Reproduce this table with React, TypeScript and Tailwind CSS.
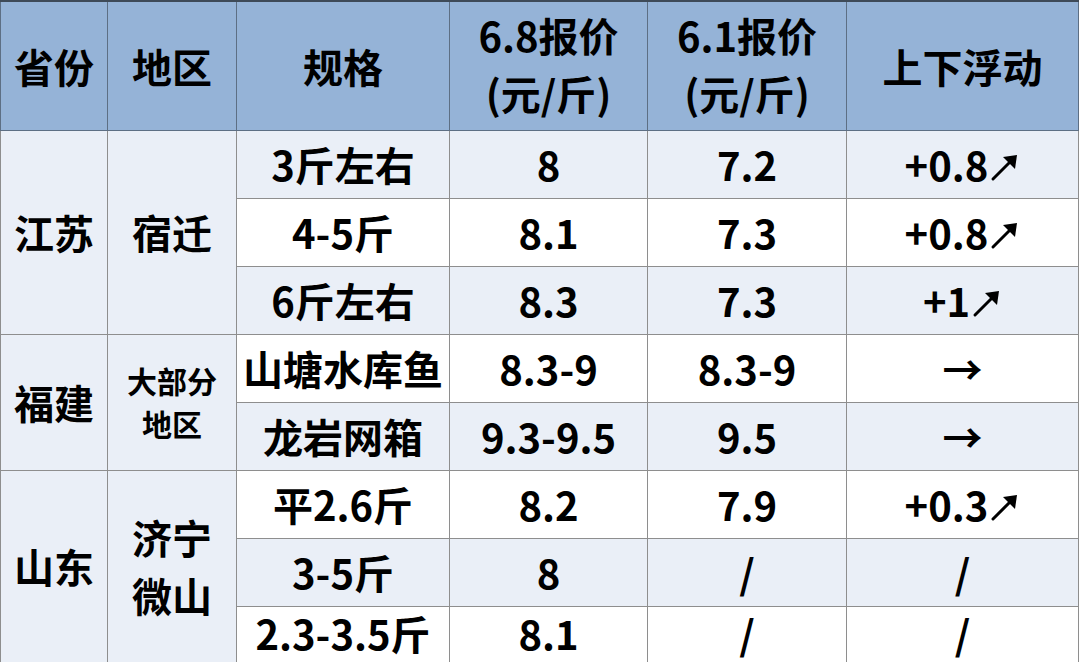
const font = { fontFamily: '"Noto Sans CJK SC", "Noto Sans", sans-serif' };

type Row = { spec: string; p68: string; p61: string; diff: string; light: boolean };

const groups: { prov: string; region: string[]; small?: boolean; rows: Row[] }[] = [
  {
    prov: "江苏",
    region: ["宿迁"],
    rows: [
      { spec: "3斤左右", p68: "8", p61: "7.2", diff: "+0.8↗", light: true },
      { spec: "4-5斤", p68: "8.1", p61: "7.3", diff: "+0.8↗", light: false },
      { spec: "6斤左右", p68: "8.3", p61: "7.3", diff: "+1↗", light: true },
    ],
  },
  {
    prov: "福建",
    region: ["大部分", "地区"],
    small: true,
    rows: [
      { spec: "山塘水库鱼", p68: "8.3-9", p61: "8.3-9", diff: "→", light: false },
      { spec: "龙岩网箱", p68: "9.3-9.5", p61: "9.5", diff: "→", light: true },
    ],
  },
  {
    prov: "山东",
    region: ["济宁", "微山"],
    rows: [
      { spec: "平2.6斤", p68: "8.2", p61: "7.9", diff: "+0.3↗", light: false },
      { spec: "3-5斤", p68: "8", p61: "/", diff: "/", light: true },
      { spec: "2.3-3.5斤", p68: "8.1", p61: "/", diff: "/", light: false },
    ],
  },
];

function Diff({ value }: { value: string }) {
  if (value.endsWith("↗")) {
    return (
      <span className="inline-flex items-center">
        {value.slice(0, -1)}
        <svg width="30" height="30" viewBox="0 0 30 30" className="ml-[2px] mt-[6px]">
          <path d="M3 27 L22 8" stroke="#000" strokeWidth="3" strokeLinecap="round" />
          <path d="M13 5 L27 3 L25 17 Z" fill="#000" />
        </svg>
      </span>
    );
  }
  return <span>{value}</span>;
}

export default function App() {
  const td = "border border-[#8e8e8e] text-center align-middle font-bold text-black";
  return (
    <div className="h-[662px] w-[1080px] overflow-hidden bg-white" style={font}>
      <table className="table-fixed border-collapse border-t-2 border-t-[#3e4a58]">
        <colgroup>
          <col className="w-[107px]" />
          <col className="w-[129px]" />
          <col className="w-[213px]" />
          <col className="w-[198px]" />
          <col className="w-[199px]" />
          <col className="w-[232px]" />
        </colgroup>
        <thead>
          <tr className="h-[129px] bg-[#95b3d7] text-[40px] leading-[1.45]">
            <th className="border border-[#5d6f84] font-bold">省份</th>
            <th className="border border-[#5d6f84] font-bold">地区</th>
            <th className="border border-[#5d6f84] font-bold">规格</th>
            <th className="border border-[#5d6f84] pb-[4px] font-bold">
              6.8报价
              <br />
              (元/斤)
            </th>
            <th className="border border-[#5d6f84] pb-[4px] font-bold">
              6.1报价
              <br />
              (元/斤)
            </th>
            <th className="border border-[#5d6f84] font-bold">上下浮动</th>
          </tr>
        </thead>
        <tbody className="text-[40px] leading-[1.45]">
          {groups.map((g) =>
            g.rows.map((r, i) => {
              const last = g.prov === "山东" && i === 2;
              return (
                <tr
                  key={g.prov + i}
                  className={`${last ? "h-[56px]" : "h-[68px]"} ${r.light ? "bg-[#eaeff7]" : "bg-white"}`}
                >
                  {i === 0 && (
                    <>
                      <td rowSpan={g.rows.length} className={`${td} bg-[#eaeff7]`}>
                        {g.prov}
                      </td>
                      <td
                        rowSpan={g.rows.length}
                        className={`${td} bg-[#eaeff7] ${g.small ? "text-[30px] leading-[1.45]" : ""}`}
                      >
                        {g.region.map((t, k) => (
                          <div key={k}>{t}</div>
                        ))}
                      </td>
                    </>
                  )}
                  <td className={`${td} ${last ? "pb-[2px] leading-[1.2]" : ""}`}>{r.spec}</td>
                  <td className={`${td} ${last ? "pb-[2px] leading-[1.2]" : ""}`}>{r.p68}</td>
                  <td className={`${td} ${last ? "pb-[2px] leading-[1.2]" : ""}`}>{r.p61}</td>
                  <td className={`${td} ${last ? "pb-[2px] leading-[1.2]" : ""}`}>
                    <Diff value={r.diff} />
                  </td>
                </tr>
              );
            })
          )}
        </tbody>
      </table>
    </div>
  );
}
